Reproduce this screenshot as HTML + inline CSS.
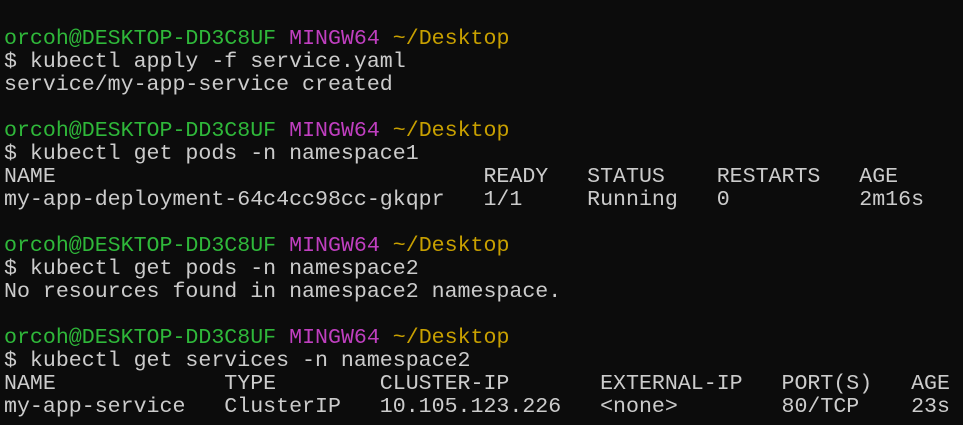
<!DOCTYPE html>
<html><head><meta charset="utf-8"><style>
html,body{margin:0;padding:0;background:#0c0c0c;width:963px;height:425px;overflow:hidden}
pre{margin:0;position:absolute;left:4px;top:5px;font-family:"Liberation Mono",monospace;font-size:21.6px;line-height:23px;color:#cccccc;white-space:pre}
.g{color:#2fb83a}.m{color:#c03fc0}.y{color:#c8a000}
</style></head><body><pre>

<span class="g">orcoh@DESKTOP-DD3C8UF</span> <span class="m">MINGW64</span> <span class="y">~/Desktop</span>
$ kubectl apply -f service.yaml
service/my-app-service created

<span class="g">orcoh@DESKTOP-DD3C8UF</span> <span class="m">MINGW64</span> <span class="y">~/Desktop</span>
$ kubectl get pods -n namespace1
NAME                                 READY   STATUS    RESTARTS   AGE
my-app-deployment-64c4cc98cc-gkqpr   1/1     Running   0          2m16s

<span class="g">orcoh@DESKTOP-DD3C8UF</span> <span class="m">MINGW64</span> <span class="y">~/Desktop</span>
$ kubectl get pods -n namespace2
No resources found in namespace2 namespace.

<span class="g">orcoh@DESKTOP-DD3C8UF</span> <span class="m">MINGW64</span> <span class="y">~/Desktop</span>
$ kubectl get services -n namespace2
NAME             TYPE        CLUSTER-IP       EXTERNAL-IP   PORT(S)   AGE
my-app-service   ClusterIP   10.105.123.226   &lt;none&gt;        80/TCP    23s
</pre></body></html>
